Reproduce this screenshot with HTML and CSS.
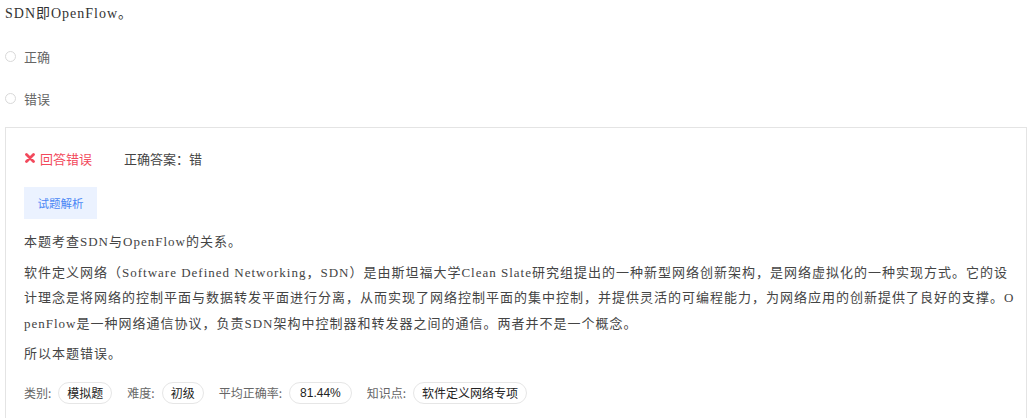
FILE: index.html
```html
<!DOCTYPE html>
<html lang="zh-CN">
<head>
<meta charset="utf-8">
<title>SDN即OpenFlow</title>
<link rel="stylesheet" href="styles.css">
</head>
<body>
<div class="question">
  <div class="stem">SDN即OpenFlow。</div>
  <div class="options">
    <label class="option"><span class="radio"></span><span class="opt-text">正确</span></label>
    <label class="option"><span class="radio"></span><span class="opt-text">错误</span></label>
  </div>
  <div class="result">
    <div class="status-row">
      <span class="wrong">
        <svg class="x-icon" width="10" height="10" viewBox="0 0 10 10"><path d="M1.5 1.5 L8.5 8.5 M8.5 1.5 L1.5 8.5" stroke="#f2495c" stroke-width="2.8" stroke-linecap="round"/></svg>
        回答错误
      </span>
      <span class="answer">正确答案：错</span>
    </div>
    <div class="btn-row"><span class="analysis-btn">试题解析</span></div>
    <div class="analysis">
      <p>本题考查SDN与OpenFlow的关系。</p>
      <p>软件定义网络（Software Defined Networking，SDN）是由斯坦福大学Clean Slate研究组提出的一种新型网络创新架构，是网络虚拟化的一种实现方式。它的设计理念是将网络的控制平面与数据转发平面进行分离，从而实现了网络控制平面的集中控制，并提供灵活的可编程能力，为网络应用的创新提供了良好的支撑。OpenFlow是一种网络通信协议，负责SDN架构中控制器和转发器之间的通信。两者并不是一个概念。</p>
      <p>所以本题错误。</p>
    </div>
    <div class="meta">
      <span class="meta-label">类别:</span><span class="pill">模拟题</span>
      <span class="meta-label">难度:</span><span class="pill">初级</span>
      <span class="meta-label">平均正确率:</span><span class="pill num">81.44%</span>
      <span class="meta-label">知识点:</span><span class="pill">软件定义网络专项</span>
    </div>
  </div>
</div>
</body>
</html>
```

FILE: styles.css
```css
html, body {
  margin: 0;
  padding: 0;
  background: #fff;
}
body {
  font-family: "Liberation Serif", "Noto Sans CJK SC", serif;
  color: #333;
  overflow: hidden;
}
.question {
  padding-left: 5px;
}
.stem {
  font-size: 14px;
  line-height: 28px;
  letter-spacing: 1px;
  color: #333;
}
.options {
  margin-top: 7px;
}
.option {
  display: flex;
  align-items: center;
  height: 42px;
  font-family: "Noto Sans CJK SC", "Liberation Sans", sans-serif;
  font-size: 13px;
  color: #666;
}
.radio {
  width: 9px;
  height: 9px;
  border: 1px solid #d9d9d9;
  border-radius: 50%;
  margin-right: 8px;
}
.result {
  margin-top: 8px;
  border: 1px solid #e4e4e4;
  padding: 19px 8px 20px 18px;
}
.status-row {
  display: flex;
  align-items: center;
  height: 22px;
  font-family: "Noto Sans CJK SC", "Liberation Sans", sans-serif;
  font-size: 13px;
}
.wrong {
  display: flex;
  align-items: center;
  color: #f2495c;
  width: 99px;
  padding-left: 1px;
}
.x-icon {
  margin-right: 5px;
}
.answer {
  color: #444;
}
.btn-row {
  margin-top: 18px;
  display: flex;
}
.analysis-btn {
  display: inline-flex;
  align-items: center;
  justify-content: center;
  width: 73px;
  height: 32px;
  background: #ebf2ff;
  color: #4a87f5;
  font-family: "Noto Sans CJK SC", "Liberation Sans", sans-serif;
  font-size: 11.5px;
}
.analysis {
  margin-top: 10px;
  font-size: 13px;
  line-height: 25.5px;
  color: #444;
  letter-spacing: 1px;
  word-break: break-all;
}
.analysis p {
  margin: 0 0 5px 0;
}
.meta {
  margin-top: 15px;
  display: flex;
  align-items: center;
  font-family: "Noto Sans CJK SC", "Liberation Sans", sans-serif;
  font-size: 12px;
}
.meta-label {
  color: #666;
  margin-right: 7px;
}
.pill {
  display: inline-flex;
  align-items: center;
  height: 20px;
  padding: 0 8px;
  border: 1px solid #e6e6e6;
  border-radius: 11px;
  color: #222;
  margin-right: 15px;
}
.pill.num {
  font-family: "Liberation Sans", sans-serif;
  padding: 0 10px;
}
```
